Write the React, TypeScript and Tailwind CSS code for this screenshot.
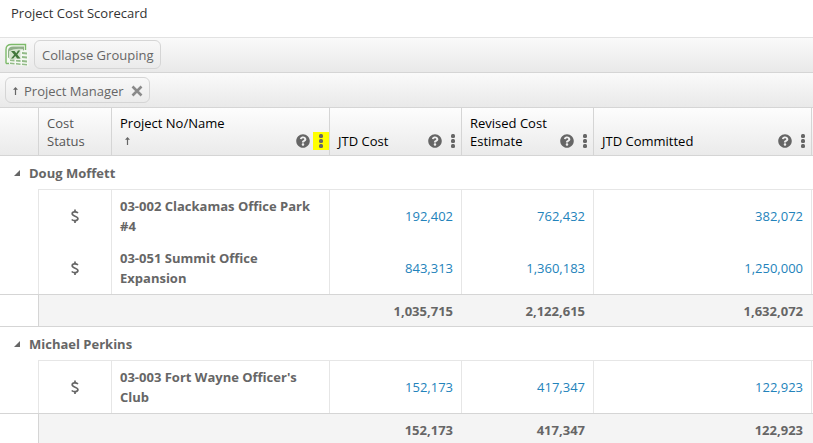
import { Fragment } from "react";
import { FaQuestionCircle } from "react-icons/fa";

type Row = { name: string; values: string[] };
type Group = { manager: string; rows: Row[]; totals: string[] };

const groups: Group[] = [
  {
    manager: "Doug Moffett",
    rows: [
      { name: "03-002 Clackamas Office Park #4", values: ["192,402", "762,432", "382,072"] },
      { name: "03-051 Summit Office Expansion", values: ["843,313", "1,360,183", "1,250,000"] },
    ],
    totals: ["1,035,715", "2,122,615", "1,632,072"],
  },
  {
    manager: "Michael Perkins",
    rows: [{ name: "03-003 Fort Wayne Officer's Club", values: ["152,173", "417,347", "122,923"] }],
    totals: ["152,173", "417,347", "122,923"],
  },
];

function ArrowUp() {
  return (
    <svg width="7" height="8" viewBox="0 0 7 8" fill="#666" aria-hidden="true">
      <path d="M3.500 0 6 2.800H4.100V8H2.900V2.800H1z" />
    </svg>
  );
}

function ExcelIcon() {
  return (
    <svg width="24" height="24" viewBox="0 0 24 24" aria-hidden="true">
      <path d="M1 20.500V6.500Q1 1.500 6.500 1.500H20.500V7" fill="#f6faf3" stroke="#7dba6a" strokeWidth="1.400" />
      <path d="M1 20.500h4" stroke="#7dba6a" strokeWidth="1.400" />
      <path d="M3 15V8Q3 3.500 8 3.500H19V8z" fill="#8fae88" />
      <path d="M4 8Q10 5 18 6V16L4 17z" fill="#d5e5cf" />
      <path d="M15.500 7 23.500 8V23.500L4 21.500V16L15.500 16.500z" fill="#f4f8f2" />
      <path d="M17 9 22 9.500V11.500L17 11zM17 13 22 13.500V15.500L17 15zM17 17 22 17.500V19.500L17 19zM17 20.500 22 21V22.500L17 22zM11 17H15.500V19L11 18.500zM11 20 15.500 20.500V22L11 21.500zM5 16.500H9.500V18.500L5 18zM5 19.500 9.500 20V21.500L5 21z" fill="#93bb88" />
      <path d="M6 8h3.500l1.800 2.300L13 7.500H15.200L12.300 11.500 15.500 15.500H12.200l-1.900-2.500L8.200 15.500H6l3.200-3.800z" fill="#42783c" />
    </svg>
  );
}

function DollarIcon() {
  return (
    <svg width="8" height="14" viewBox="0 0 8 14" fill="none" stroke="#666" className="mx-auto" role="img" aria-label="Cost status">
      <path d="M4 .5V3M4 11.500v2.500" strokeWidth="1.700" />
      <path d="M7 4C5.500 2.600 1.200 2.300 1.200 4.800 1.200 7.600 6.900 6.800 6.900 9.600 6.900 12.200 2.500 12.200.7 10.500" strokeWidth="1.700" />
    </svg>
  );
}

function HeaderTools({ highlighted = false }: { highlighted?: boolean }) {
  return (
    <span className="flex shrink-0 items-center gap-[3px]">
      <button type="button" aria-label="Help" className="text-[#666]">
        <FaQuestionCircle size={14} />
      </button>
      <button
        type="button"
        aria-label="Column menu"
        className={
          highlighted
            ? "flex h-[18px] w-4 items-center justify-center bg-[#ffff00]"
            : "flex h-[18px] w-4 items-center justify-center"
        }
      >
        <svg width="4" height="14" viewBox="0 0 4 14" fill="#666" aria-hidden="true">
          <rect width="4" height="4" rx="1.500" />
          <rect y="5" width="4" height="4" rx="1.500" />
          <rect y="10" width="4" height="4" rx="1.500" />
        </svg>
      </button>
    </span>
  );
}

const headCell = "border-b border-l border-[#d5d5d5] pt-1.5 pb-[5px] pl-2 text-left align-bottom font-normal";
const bar = "flex items-center border-b border-[#d5d5d5] bg-linear-to-b from-[#fafafa] to-[#e9e9e9] pl-[5px]";

export default function App() {
  return (
    <main className="flex h-screen flex-col overflow-hidden bg-white font-['Open_Sans','Noto_Sans',sans-serif] text-[13px] leading-[18px] text-[#666]">
      <h1 className="border-b border-[#e2e2e2] pt-1 pb-[15px] pl-[11px] text-[#333]">Project Cost Scorecard</h1>
      <div className={`${bar} gap-[5px] pt-[2px] pb-[3px]`}>
        <button type="button" aria-label="Export to Excel">
          <ExcelIcon />
        </button>
        <button type="button" className="rounded-md border border-[#d5d5d5] px-[7px] pt-[5px] pb-1">
          Collapse Grouping
        </button>
      </div>
      <div className={`${bar} py-1`}>
        <div className="flex items-center gap-[5px] rounded-md border border-[#d5d5d5] px-1.5 pt-1 pb-0.5">
          <ArrowUp />
          <button type="button">Project Manager</button>
          <button type="button" aria-label="Remove grouping" className="ml-0.5">
            <svg width="12" height="12" viewBox="0 0 12 12" stroke="#8a8a8a" strokeWidth="2.600" aria-hidden="true">
              <path d="M1.500 1.500 10.500 10.500M10.500 1.500 1.500 10.500" />
            </svg>
          </button>
        </div>
      </div>
      <table className="w-full table-fixed border-separate border-spacing-0">
        <colgroup>
          <col className="w-[38px]" />
          <col className="w-[73px]" />
          <col className="w-[218px]" />
          <col className="w-[132px]" />
          <col className="w-[132px]" />
          <col />
          <col className="w-[2px]" />
        </colgroup>
        <thead className="bg-linear-to-b from-[#fdfdfd] to-[#eaeaea] text-black">
          <tr>
            <td className="border-b border-[#d5d5d5]" />
            <th scope="col" className={`${headCell} text-[#555]`}>
              Cost
              <br />
              Status
            </th>
            <th scope="col" className={headCell}>
              <div>Project No/Name</div>
              <div className="flex items-center justify-between pl-1">
                <ArrowUp />
                <HeaderTools highlighted />
              </div>
            </th>
            {["JTD Cost", "Revised Cost Estimate", "JTD Committed"].map((label) => (
              <th key={label} scope="col" className={headCell}>
                <div className="flex items-end justify-between">
                  <span>{label}</span>
                  <HeaderTools />
                </div>
              </th>
            ))}
            <td className="border-b border-l border-[#d5d5d5]" />
          </tr>
        </thead>
        <tbody>
          {groups.map((group) => (
            <Fragment key={group.manager}>
              <tr>
                <th scope="rowgroup" colSpan={7} className="h-[33px] pl-3.5 text-left font-bold">
                  <button type="button" aria-expanded="true" className="flex items-center gap-[9px]">
                    <svg width="6" height="6" viewBox="0 0 6 6" fill="#666" aria-hidden="true">
                      <path d="M6 0V6H0z" />
                    </svg>
                    {group.manager}
                  </button>
                </th>
              </tr>
              {group.rows.map((row, index) => {
                const cell = index === 0 ? "border-t border-l border-[#e6e6e6]" : "border-l border-[#e6e6e6]";
                return (
                  <tr key={row.name}>
                    <td />
                    <td className={cell}>
                      <DollarIcon />
                    </td>
                    <th scope="row" className={`${cell} px-2 py-1.5 text-left leading-5 font-bold`}>
                      {row.name}
                    </th>
                    {row.values.map((value) => (
                      <td key={value} className={`${cell} pr-2 text-right`}>
                        <a href="#detail" className="text-[#2383bb]">
                          {value}
                        </a>
                      </td>
                    ))}
                    <td className={cell} />
                  </tr>
                );
              })}
              <tr className="font-bold">
                <td className="h-[33px] border-y border-[#d5d5d5]" />
                <td colSpan={2} className="border-y border-l border-[#d5d5d5] bg-[#f4f4f4]" />
                {group.totals.map((total) => (
                  <td key={total} className="border-y border-[#d5d5d5] bg-[#f4f4f4] pr-2 text-right">
                    {total}
                  </td>
                ))}
                <td className="border-y border-[#d5d5d5] bg-[#f4f4f4]" />
              </tr>
            </Fragment>
          ))}
        </tbody>
      </table>
    </main>
  );
}
